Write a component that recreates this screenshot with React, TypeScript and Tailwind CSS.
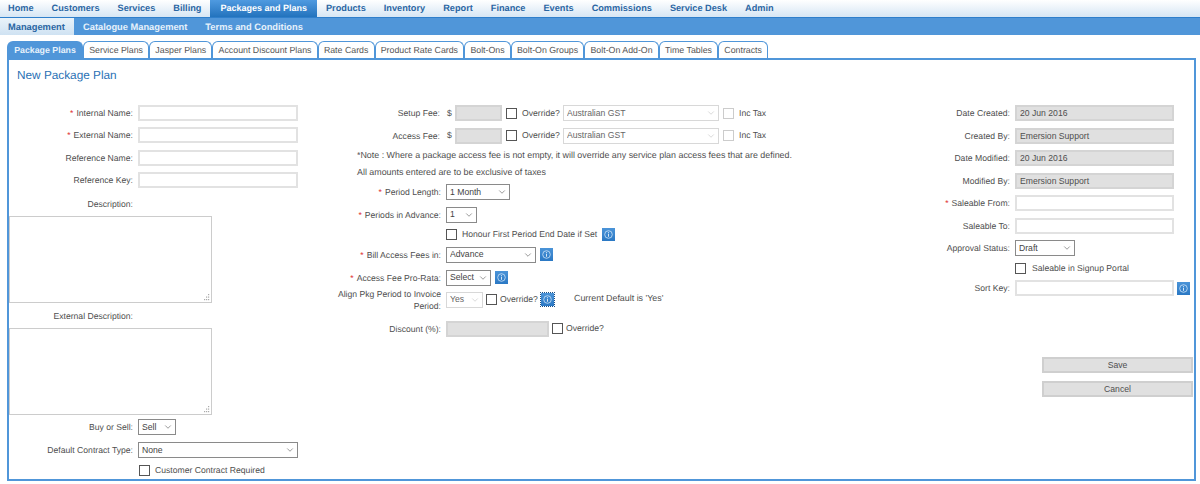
import React from "react";
import { ChevronDown } from "lucide-react";

const top = [
  ["Home", false], ["Customers", false], ["Services", false], ["Billing", false], ["Packages and Plans", true],
  ["Products", false], ["Inventory", false], ["Report", false], ["Finance", false], ["Events", false],
  ["Commissions", false], ["Service Desk", false], ["Admin", false],
] as const;
const tabs = ["Package Plans", "Service Plans", "Jasper Plans", "Account Discount Plans", "Rate Cards", "Product Rate Cards", "Bolt-Ons", "Bolt-On Groups", "Bolt-On Add-On", "Time Tables", "Contracts"];

function Info({ focus }: { focus?: boolean }) {
  return (
    <span className={"inline-flex w-[13px] h-[13px] shrink-0 items-center justify-center bg-gradient-to-b from-[#4b94d8] to-[#2a78c4] " + (focus ? "outline-1 outline-dotted outline-[#1b4f85]" : "")}>
      <svg width="9" height="9" viewBox="0 0 9 9" fill="none">
        <circle cx="4.5" cy="4.5" r="3.8" stroke="#cfe4f7" strokeWidth="0.8" />
        <path d="M4.5 2.2v.9M4.5 3.8v3" stroke="#e6f2fb" strokeWidth="0.9" />
      </svg>
    </span>
  );
}
function Check({ dim }: { dim?: boolean }) {
  return <input type="checkbox" className={"appearance-none w-[11px] h-[11px] shrink-0 bg-white border " + (dim ? "border-[#ccc]" : "border-[#555]")} />;
}
function Req() {
  return <span className="text-[#e03030] mr-[3px]">*</span>;
}
function Label({ req, children, w }: { req?: boolean; children: React.ReactNode; w: string }) {
  return (
    <span className={"text-right shrink-0 mr-[5px] leading-[12px] " + w}>
      {req && <Req />}
      {children}
    </span>
  );
}
function Text({ value, w, off }: { value?: string; w: string; off?: boolean }) {
  return (
    <input readOnly value={value ?? ""} className={"h-[16px] px-[3px] border-2 text-[8.65px] text-[#4f4f4f] outline-none " + w + " " + (off ? "bg-[#e0e0e0] border-[#d4d4d4]" : "bg-white border-[#e2e2e2]")} />
  );
}
function Sel({ value, w, off }: { value: string; w: string; off?: boolean }) {
  return (
    <span className={"relative shrink-0 " + w}>
      <select defaultValue={value} className={"appearance-none w-full block h-[16px] pl-[3px] text-[8.65px] bg-white border outline-none " + (off ? "border-[#d8d8d8] text-[#666]" : "border-[#8a8a8a] text-[#444]")}>
        <option>{value}</option>
      </select>
      <ChevronDown size={10} strokeWidth={1.3} className={"absolute right-[3px] top-[3px] " + (off ? "text-[#bbb]" : "text-[#444]")} />
    </span>
  );
}
function Area() {
  return (
    <span className="relative block w-[203px] h-[87px] shrink-0">
      <textarea readOnly className="block w-full h-full resize-none border border-[#ccc] bg-white outline-none" />
      <svg width="7" height="7" viewBox="0 0 7 7" className="absolute right-[2px] bottom-[2px]" fill="#aaa">
        <rect x="5" y="0" width="1.2" height="1.2" /><rect x="3" y="2.5" width="1.2" height="1.2" /><rect x="5" y="2.5" width="1.2" height="1.2" />
        <rect x="1" y="5" width="1.2" height="1.2" /><rect x="3" y="5" width="1.2" height="1.2" /><rect x="5" y="5" width="1.2" height="1.2" />
      </svg>
    </span>
  );
}

export default function App() {
  return (
    <div className="w-[1200px] h-[484px] bg-white overflow-hidden text-[8.65px] text-[#4f4f4f] [text-rendering:geometricPrecision] font-['Liberation_Sans',Arial,sans-serif]">
      <nav className="flex h-[18px] border-b border-[#2f7fcb] bg-gradient-to-b from-white to-[#d6e6f4] text-[9.2px] font-bold text-[#2a66a3]">
        {top.map(([t, a], i) => (
          <span key={t} className={"h-[17px] leading-[17px] " + (i === 0 ? "pl-[8px] pr-[9px] " : a ? "px-[10px] " : "px-[9px] ") + (a ? "bg-gradient-to-b from-[#4f9ae0] to-[#2273bd] text-white text-[9px]" : "")}>{t}</span>
        ))}
      </nav>
      <nav className="flex h-[17px] bg-[#5096d9] text-[9.3px] font-bold text-[#e6f1fb]">
        <span className="px-[8px] w-[74px] bg-gradient-to-b from-[#eaf3fa] to-[#cfe2f2] text-[#2a66a3] leading-[18px]">Management</span>
        <span className="px-[9px] leading-[18px]">Catalogue Management</span>
        <span className="px-[9px] leading-[18px]">Terms and Conditions</span>
      </nav>
      <div className="flex ml-[7px] mt-[6px] h-[17px] text-[8.8px]">
        {tabs.map((t, i) => (
          <span key={t} className={"rounded-t-[6px] border-b-0 border-[#5096d9] px-[5.2px] " + (i === 0 ? "border-2 border-b-0 leading-[15px] bg-[#5096d9] text-[#e6f1fb] font-bold" : "border border-b-0 leading-[16px] bg-white text-[#555]")}>{t}</span>
        ))}
      </div>
      <main className="ml-[7px] w-[1189px] h-[423px] border-2 border-[#5096d9] relative">
        <h1 className="pl-[8px] pt-[8px] h-[42px] text-[11.8px] leading-[15px] text-[#2a71b5]">New Package Plan</h1>
        <div className="flex">
          {/* left */}
          <div className="w-[331px] flex flex-col">
            <div className="flex items-center h-[22px]"><Label req w="w-[124px]">Internal Name:</Label><Text w="w-[160px]" /></div>
            <div className="flex items-center h-[22px]"><Label req w="w-[124px]">External Name:</Label><Text w="w-[160px]" /></div>
            <div className="flex items-center h-[23px]"><Label w="w-[124px]">Reference Name:</Label><Text w="w-[160px]" /></div>
            <div className="flex items-center h-[22px]"><Label w="w-[124px]">Reference Key:</Label><Text w="w-[160px]" /></div>
            <div className="flex items-center h-[25px]"><Label w="w-[124px]">Description:</Label></div>
            <Area />
            <div className="flex items-center h-[25px]"><Label w="w-[124px]">External Description:</Label></div>
            <Area />
            <div className="flex items-center h-[24px]"><Label w="w-[124px]">Buy or Sell:</Label><Sel value="Sell" w="w-[38px]" /></div>
            <div className="flex items-center h-[22px]"><Label w="w-[124px]">Default Contract Type:</Label><Sel value="None" w="w-[160px]" /></div>
            <div className="flex items-center h-[19px] pl-[130px]"><Check /><span className="ml-[5px]">Customer Contract Required</span></div>
          </div>
          {/* centre */}
          <div className="w-[560px] flex flex-col">
            <div className="flex items-center h-[22px]">
              <Label w="w-[100px]">Setup Fee:</Label><span className="w-[10px] pl-[2px]">$</span><Text w="w-[47px]" off />
              <span className="w-[4px]" /><Check /><span className="w-[46px] pl-[5px]">Override?</span><Sel value="Australian GST" w="w-[156px]" off />
              <span className="w-[4px]" /><Check dim /><span className="ml-[5px]">Inc Tax</span>
            </div>
            <div className="flex items-center h-[23px]">
              <Label w="w-[100px]">Access Fee:</Label><span className="w-[10px] pl-[2px]">$</span><Text w="w-[47px]" off />
              <span className="w-[4px]" /><Check /><span className="w-[46px] pl-[5px]">Override?</span><Sel value="Australian GST" w="w-[156px]" off />
              <span className="w-[4px]" /><Check dim /><span className="ml-[5px]">Inc Tax</span>
            </div>
            <div className="h-[16px] leading-[16px] pl-[17px] text-[8.9px]">*Note : Where a package access fee is not empty, it will override any service plan access fees that are defined.</div>
            <div className="h-[18px] leading-[18px] pl-[17px] text-[8.9px]">All amounts entered are to be exclusive of taxes</div>
            <div className="flex items-center h-[22px]"><Label req w="w-[101px]">Period Length:</Label><Sel value="1 Month" w="w-[64px]" /></div>
            <div className="flex items-center h-[23px]"><Label req w="w-[101px]">Periods in Advance:</Label><Sel value="1" w="w-[31px]" /></div>
            <div className="flex items-center h-[17px] pl-[106px]"><Check /><span className="ml-[5px] mr-[5px]">Honour First Period End Date if Set</span><Info /></div>
            <div className="flex items-center h-[23px]"><Label req w="w-[101px]">Bill Access Fees in:</Label><Sel value="Advance" w="w-[90px]" /><span className="w-[4px]" /><Info /></div>
            <div className="flex items-center h-[23px]"><Label req w="w-[101px]">Access Fee Pro-Rata:</Label><Sel value="Select" w="w-[45px]" /><span className="w-[4px]" /><Info /></div>
            <div className="flex items-center h-[21px]">
              <Label w="w-[104px] -ml-[3px]">Align Pkg Period to Invoice Period:</Label><Sel value="Yes" w="w-[37px]" off />
              <span className="w-[3px]" /><Check /><span className="w-[44px] pl-[3px]">Override?</span><Info focus />
              <span className="ml-[20px] -mt-[2px] text-[8.9px]">Current Default is 'Yes'</span>
            </div>
            <div className="flex items-center h-[31px] pt-[6px]">
              <Label w="w-[101px]">Discount (%):</Label><Text w="w-[103px]" off /><span className="w-[3px]" /><Check /><span className="ml-[3px]">Override?</span>
            </div>
          </div>
          {/* right */}
          <div className="flex-1 flex flex-col">
            <div className="flex items-center h-[22px]"><Label w="w-[110px]">Date Created:</Label><Text value="20 Jun 2016" w="w-[159px]" off /></div>
            <div className="flex items-center h-[23px]"><Label w="w-[110px]">Created By:</Label><Text value="Emersion Support" w="w-[159px]" off /></div>
            <div className="flex items-center h-[22px]"><Label w="w-[110px]">Date Modified:</Label><Text value="20 Jun 2016" w="w-[159px]" off /></div>
            <div className="flex items-center h-[23px]"><Label w="w-[110px]">Modified By:</Label><Text value="Emersion Support" w="w-[159px]" off /></div>
            <div className="flex items-center h-[22px]"><Label req w="w-[110px]">Saleable From:</Label><Text w="w-[159px]" /></div>
            <div className="flex items-center h-[23px]"><Label w="w-[110px]">Saleable To:</Label><Text w="w-[159px]" /></div>
            <div className="flex items-center h-[22px]"><Label w="w-[110px]">Approval Status:</Label><Sel value="Draft" w="w-[60px]" /></div>
            <div className="flex items-center h-[19px] pl-[115px]"><Check /><span className="ml-[6px]">Saleable in Signup Portal</span></div>
            <div className="flex items-center h-[20px]"><Label w="w-[110px]">Sort Key:</Label><Text w="w-[159px]" /><span className="w-[3px]" /><Info /></div>
            <div className="flex flex-col items-end gap-[8px] mt-[59px] pr-[1px]">
              <button className="w-[151px] h-[16px] bg-[#e0e0e0] border-2 border-[#cfcfcf] text-[8.65px] text-[#4f4f4f] leading-[12px]">Save</button>
              <button className="w-[151px] h-[16px] bg-[#e0e0e0] border-2 border-[#cfcfcf] text-[8.65px] text-[#4f4f4f] leading-[12px]">Cancel</button>
            </div>
          </div>
        </div>
      </main>
    </div>
  );
}
